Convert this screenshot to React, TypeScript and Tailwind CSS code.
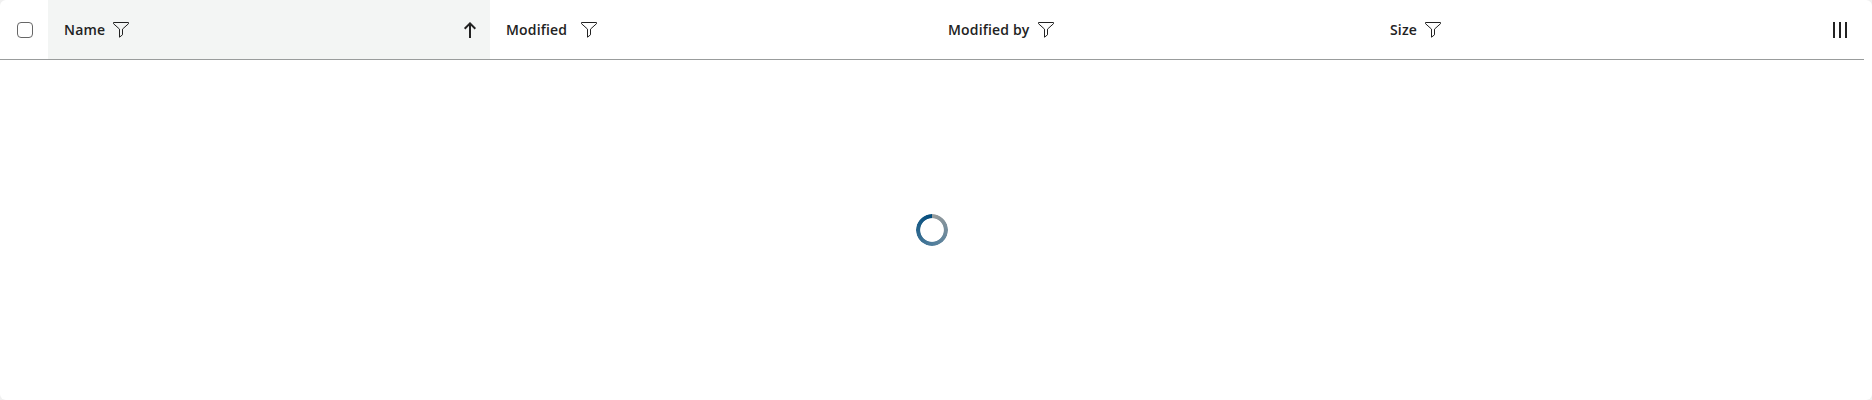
import React from 'react';

function FilterIcon() {
  return (
    <svg width="16" height="16" viewBox="0 0 16 16" fill="none" stroke="#222" className="shrink-0">
      <path d="M.5 .5h15v1.2L9.5 7.1v5.7l-3 2.4V7.1L.5 1.7z" />
    </svg>
  );
}

function SortIcon() {
  return (
    <svg width="16" height="16" viewBox="0 0 16 16" fill="none" stroke="#222" strokeWidth="2" className="shrink-0">
      <path d="M8 16V1.5M2.7 6.7L8 1.4l5.3 5.3" />
    </svg>
  );
}

function ColumnsIcon() {
  return (
    <svg width="16" height="16" viewBox="0 0 16 16" fill="#222">
      <path d="M1 0h2v16H1zM7 0h2v16H7zM13 0h2v16h-2z" />
    </svg>
  );
}

const columns = [
  { label: 'Name', width: 'w-[41px]', sorted: true },
  { label: 'Modified', width: 'w-[67px]', sorted: false },
  { label: 'Modified by', width: 'w-[82px]', sorted: false },
  { label: 'Size', width: 'w-[27px]', sorted: false },
];

export default function App() {
  return (
    <div className="h-[400px] w-full bg-[#f0f0f0] font-['Open_Sans',sans-serif] text-[#222]">
      <div className="flex h-full flex-col overflow-hidden rounded-md bg-white pr-2">
        <div className="flex h-[60px] shrink-0 border-b border-[#999c9c]">
          <div className="flex w-12 shrink-0 items-center pt-px pl-[17px]">
            <input type="checkbox" aria-label="Select all" className="size-4 appearance-none rounded-[4px] border border-[#666] bg-white" />
          </div>
          {columns.map((column) => (
            <div
              key={column.label}
              className={`flex w-[442px] shrink-0 items-center pt-px pl-4 ${column.sorted ? 'bg-[#f3f5f4] pr-3' : 'pr-4'}`}
            >
              <span className={`mr-2 whitespace-nowrap text-sm font-semibold tracking-[0.17px] ${column.width}`}>{column.label}</span>
              <FilterIcon />
              {column.sorted && <span className="ml-auto"><SortIcon /></span>}
            </div>
          ))}
          <div className="flex w-12 items-center justify-center pt-px"><ColumnsIcon /></div>
        </div>
        <div className="flex flex-1 items-center justify-center">
          <div
            role="progressbar"
            aria-label="Loading"
            className="size-8 rounded-full bg-[conic-gradient(#999c9c_0deg,#4f7d9c_180deg,#004b7c_360deg)] [mask:radial-gradient(circle,transparent_11.4px,black_12.2px)]"
          />
        </div>
      </div>
    </div>
  );
}
